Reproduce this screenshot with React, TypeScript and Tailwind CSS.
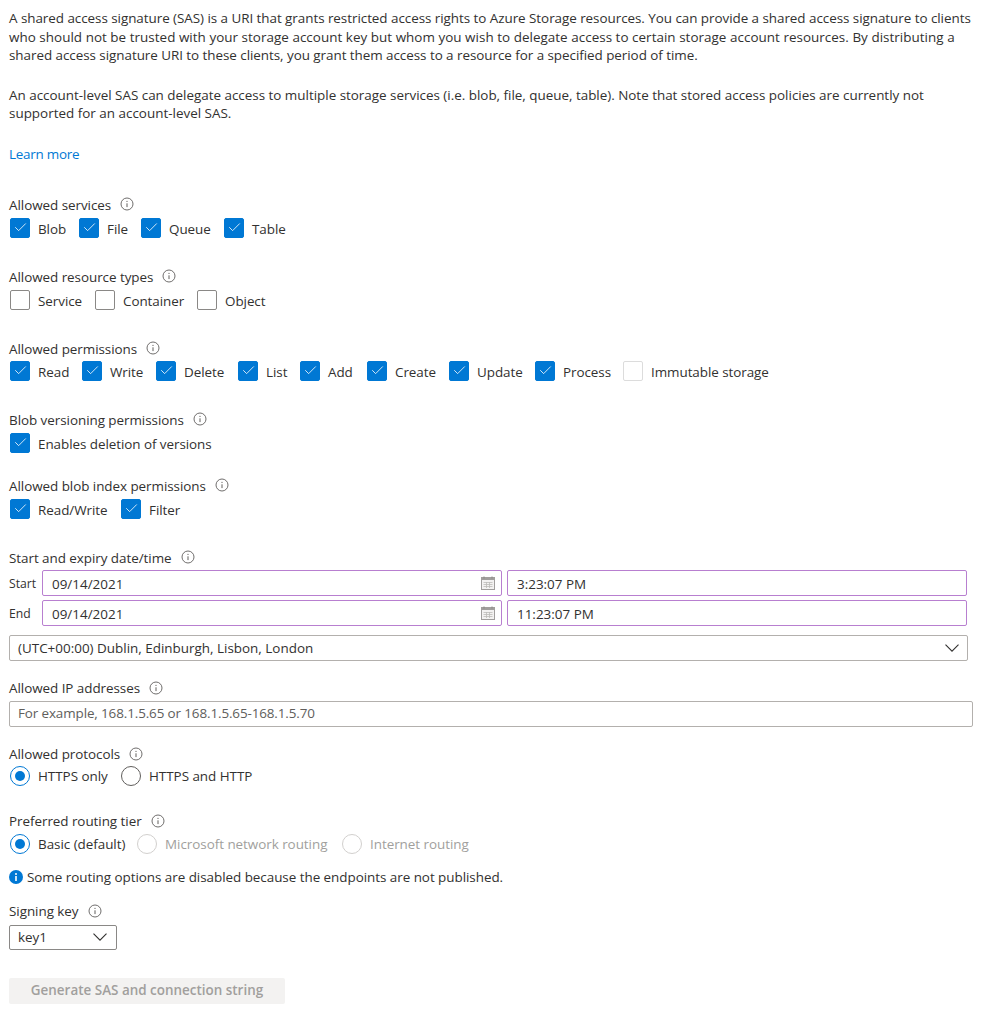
import { Check } from 'lucide-react'
import clsx from 'clsx'

function InfoIcon() {
  return (
    <svg width="14" height="14" viewBox="0 0 14 14" className="shrink-0 text-[#605e5c]" fill="none">
      <circle cx="7" cy="7" r="6" stroke="currentColor" strokeWidth="0.9" />
      <path d="M7 6.3v3.8" stroke="currentColor" strokeWidth="1" />
      <circle cx="7" cy="4.3" r="0.65" fill="currentColor" />
    </svg>
  )
}

function Chevron() {
  return (
    <svg width="14" height="8" viewBox="0 0 14 8" fill="none" className="shrink-0 text-[#323130]">
      <path d="M0.5 0.7 7 7.2l6.5-6.5" stroke="currentColor" strokeWidth="1.1" />
    </svg>
  )
}

function FieldLabel({ text, tight = false }: { text: string; tight?: boolean }) {
  return (
    <div className="flex h-5 items-center leading-5 text-[#323130]">
      <span className={clsx('tracking-[-0.05px]', !tight && 'pt-[2px]')}>{text}</span>
      <span className="ml-[9px]">
        <InfoIcon />
      </span>
    </div>
  )
}

function Checkbox({ label, checked = false, faded = false, width }: { label: string; checked?: boolean; faded?: boolean; width: string }) {
  return (
    <div className={clsx('flex h-5 items-center', width)}>
      <span
        className={clsx(
          'mr-2 flex h-5 w-5 shrink-0 items-center justify-center rounded-[2px] border',
          checked ? 'border-[#0078d4] bg-[#0078d4]' : faded ? 'border-[#dcdcdc] bg-white' : 'border-[#8a8886] bg-white',
        )}
      >
        {checked && <Check size={15} strokeWidth={1.3} className="text-white" />}
      </span>
      <span className="whitespace-nowrap pt-[2px] leading-5 tracking-[-0.06px]">{label}</span>
    </div>
  )
}

function Radio({ label, checked = false, disabled = false, width }: { label: string; checked?: boolean; disabled?: boolean; width: string }) {
  return (
    <div className={clsx('flex h-5 items-center', width)}>
      <span
        className={clsx(
          'mr-2 flex h-5 w-5 shrink-0 items-center justify-center rounded-full border',
          checked ? 'border-[#0078d4]' : disabled ? 'border-[#d2d0ce]' : 'border-[#605e5c]',
        )}
      >
        {checked && <span className="h-[10px] w-[10px] rounded-full bg-[#0078d4]" />}
      </span>
      <span className={clsx('whitespace-nowrap leading-5 tracking-[-0.04px]', disabled && 'text-[#a19f9d]')}>{label}</span>
    </div>
  )
}

function CalendarIcon() {
  return (
    <svg width="14" height="14" viewBox="0 0 14 14" fill="none" className="shrink-0">
      <rect x="0.5" y="1.5" width="13" height="12" fill="#f3f2f1" stroke="#a19f9d" strokeWidth="1" />
      <rect x="0.5" y="1.5" width="13" height="2.5" fill="#a19f9d" />
      <path d="M3 0.5v2M11 0.5v2" stroke="#8a8886" strokeWidth="1" />
      <path d="M2.5 6.5h9M2.5 8.5h9M2.5 10.5h9M5.5 6v6M8.5 6v6" stroke="#bdbbb9" strokeWidth="0.8" />
    </svg>
  )
}

function DateRow({ label, date, time, className }: { label: string; date: string; time: string; className?: string }) {
  return (
    <div className={clsx('flex h-[26px] items-center', className)}>
      <span className="w-[33px] shrink-0 pt-[4px] text-[12.2px]">{label}</span>
      <div className="flex h-[26px] w-[460px] items-center justify-between rounded-[2px] border border-[#b87fd0] pr-[6px] pl-[9px]">
        <span className="pt-[3px]">{date}</span>
        <CalendarIcon />
      </div>
      <div className="ml-[5px] flex h-[26px] w-[460px] items-center rounded-[2px] border border-[#b87fd0] pl-[9px]">
        <span className="pt-[3px]">{time}</span>
      </div>
    </div>
  )
}

export default function App() {
  return (
    <div className="min-h-[1024px] bg-white px-[9px] pt-[9px] font-['Open_Sans',sans-serif] text-[13.45px] text-[#323130]">
      {/* Intro */}
      <div className="leading-[18.6px] whitespace-nowrap">
        <p className="tracking-[-0.05px]">A shared access signature (SAS) is a URI that grants restricted access rights to Azure Storage resources. You can provide a shared access signature to clients</p>
        <p className="tracking-[0.03px]">who should not be trusted with your storage account key but whom you wish to delegate access to certain storage account resources. By distributing a</p>
        <p className="tracking-[-0.05px]">shared access signature URI to these clients, you grant them access to a resource for a specified period of time.</p>
        <p className="mt-[21px] tracking-[-0.015px]">An account-level SAS can delegate access to multiple storage services (i.e. blob, file, queue, table). Note that stored access policies are currently not</p>
        <p>supported for an account-level SAS.</p>
        <p className="mt-[22px] tracking-[-0.25px] text-[#0078d4]">Learn more</p>
      </div>

      <div className="mt-[30px]">
        <FieldLabel text="Allowed services" />
      </div>
      <div className="mt-1 flex h-5 pl-px">
        <Checkbox label="Blob" checked width="w-[69px]" />
        <Checkbox label="File" checked width="w-[62px]" />
        <Checkbox label="Queue" checked width="w-[83px]" />
        <Checkbox label="Table" checked width="w-[70px]" />
      </div>

      <div className="mt-[28px]">
        <FieldLabel text="Allowed resource types" />
      </div>
      <div className="mt-1 flex h-5 pl-px">
        <Checkbox label="Service" width="w-[85px]" />
        <Checkbox label="Container" width="w-[102px]" />
        <Checkbox label="Object" width="w-[80px]" />
      </div>

      <div className="mt-[28px]">
        <FieldLabel text="Allowed permissions" />
      </div>
      <div className="mt-[3px] flex h-5 pl-px">
        <Checkbox label="Read" checked width="w-[72px]" />
        <Checkbox label="Write" checked width="w-[74px]" />
        <Checkbox label="Delete" checked width="w-[82px]" />
        <Checkbox label="List" checked width="w-[62px]" />
        <Checkbox label="Add" checked width="w-[67px]" />
        <Checkbox label="Create" checked width="w-[82px]" />
        <Checkbox label="Update" checked width="w-[86px]" />
        <Checkbox label="Process" checked width="w-[88px]" />
        <Checkbox label="Immutable storage" faded width="w-[150px]" />
      </div>

      <div className="mt-[28px]">
        <FieldLabel text="Blob versioning permissions" />
      </div>
      <div className="mt-1 flex h-5 pl-px">
        <Checkbox label="Enables deletion of versions" checked width="w-[220px]" />
      </div>

      <div className="mt-[22px]">
        <FieldLabel text="Allowed blob index permissions" />
      </div>
      <div className="mt-1 flex h-5 pl-px">
        <Checkbox label="Read/Write" checked width="w-[111px]" />
        <Checkbox label="Filter" checked width="w-[70px]" />
      </div>

      <div className="mt-[28px]">
        <FieldLabel text="Start and expiry date/time" />
      </div>
      <DateRow className="mt-[3px]" label="Start" date="09/14/2021" time="3:23:07 PM" />
      <DateRow className="mt-1" label="End" date="09/14/2021" time="11:23:07 PM" />

      {/* Time zone */}
      <div className="mt-[9px] flex h-[26px] w-[959px] items-center justify-between rounded-[2px] border border-[#b3b0ad] pr-[8px] pl-2">
        <span className="pt-[2px]">(UTC+00:00) Dublin, Edinburgh, Lisbon, London</span>
        <Chevron />
      </div>

      <div className="mt-[17px]">
        <FieldLabel text="Allowed IP addresses" tight />
      </div>
      <div className="mt-[3px] flex h-[26px] w-[964px] items-center rounded-[2px] border border-[#b3b0ad] pl-2 text-[#605e5c]">
        <span className="tracking-[-0.12px]">For example, 168.1.5.65 or 168.1.5.65-168.1.5.70</span>
      </div>

      <div className="mt-[17px]">
        <FieldLabel text="Allowed protocols" tight />
      </div>
      <div className="mt-[2px] flex h-5 pl-px">
        <Radio label="HTTPS only" checked width="w-[111px]" />
        <Radio label="HTTPS and HTTP" width="w-[150px]" />
      </div>

      <div className="mt-[25px]">
        <FieldLabel text="Preferred routing tier" tight />
      </div>
      <div className="mt-[3px] flex h-5 pl-px">
        <Radio label="Basic (default)" checked width="w-[127px]" />
        <Radio label="Microsoft network routing" disabled width="w-[205px]" />
        <Radio label="Internet routing" disabled width="w-[140px]" />
      </div>

      {/* Routing notice */}
      <div className="mt-[13px] flex h-5 items-center">
        <svg width="14" height="14" viewBox="0 0 14 14" className="mr-[4px] shrink-0">
          <circle cx="7" cy="7" r="7" fill="#0078d4" />
          <rect x="6.2" y="6" width="1.6" height="5" fill="#fff" />
          <circle cx="7" cy="4" r="1" fill="#fff" />
        </svg>
        <span className="pt-[2px] tracking-[-0.04px]">Some routing options are disabled because the endpoints are not published.</span>
      </div>

      <div className="mt-[14px]">
        <FieldLabel text="Signing key" tight />
      </div>
      <div className="mt-1 flex h-[25px] w-[108px] items-center justify-between rounded-[2px] border border-[#8a8886] pr-[9px] pl-2">
        <span>key1</span>
        <Chevron />
      </div>

      <button className="mt-[28px] flex h-[26px] w-[276px] items-center justify-center rounded-[2px] bg-[#f3f2f1] font-semibold text-[#a19f9d]">
        Generate SAS and connection string
      </button>
    </div>
  )
}
